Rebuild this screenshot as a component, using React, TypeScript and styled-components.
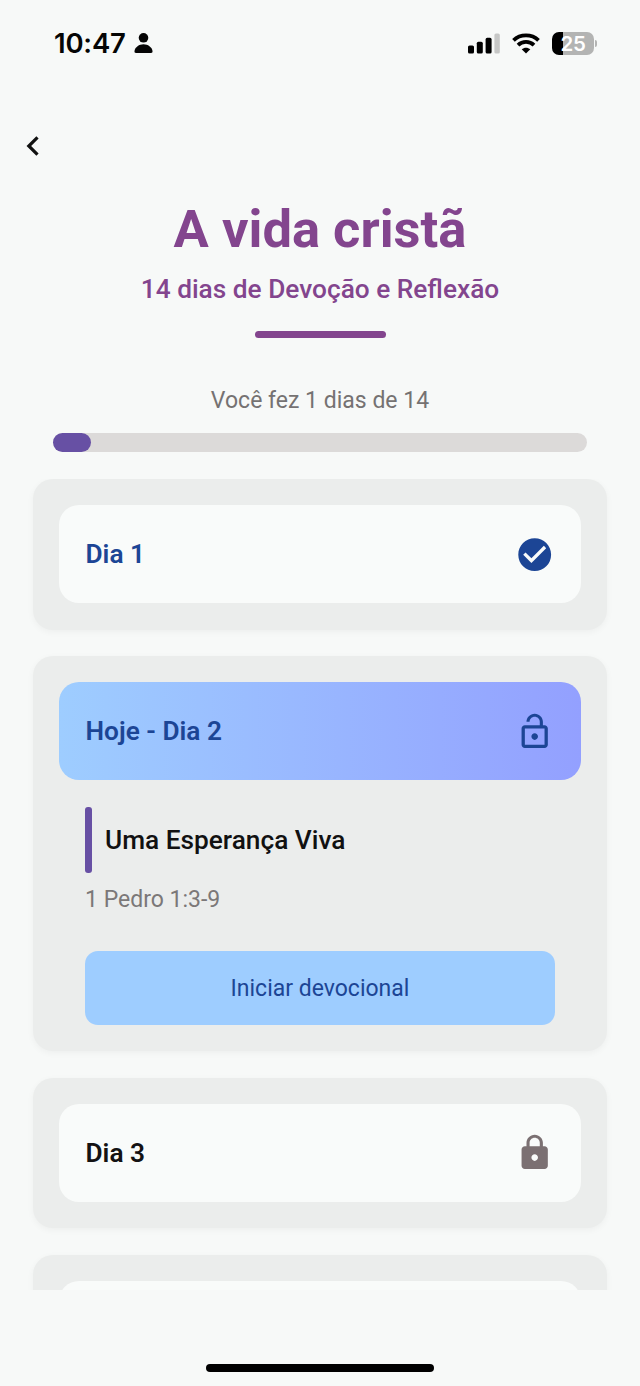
import React from "react";
import styled, { createGlobalStyle, css } from "styled-components";

const GlobalStyle = createGlobalStyle`
  * { box-sizing: border-box; }
  body { margin: 0; background: #f7f9f8; }
`;

const Screen = styled.div`
  width: 640px;
  height: 1386px;
  display: flex;
  flex-direction: column;
  overflow: hidden;
  background: #f7f9f8;
  font-family: Roboto, "Liberation Sans", sans-serif;
`;

const StatusBar = styled.header`
  height: 87px;
  flex: none;
  display: flex;
  align-items: center;
  justify-content: space-between;
  padding: 0 43px 0 54px;
`;

const Clock = styled.div`
  display: flex;
  align-items: center;
  gap: 8px;
  padding-bottom: 1px;
  color: #050505;
  font: 600 27.5px/32px Inter, "Liberation Sans", sans-serif;
  letter-spacing: -0.2px;
`;

const StatusIcons = styled.div`
  display: flex;
  align-items: center;
  gap: 12px;
`;

const Battery = styled.div`
  display: flex;
  align-items: center;
  gap: 1px;
`;

const BatteryBody = styled.div`
  width: 42px;
  height: 23px;
  border-radius: 7px;
  display: flex;
  align-items: center;
  justify-content: center;
  background: linear-gradient(90deg, #000 0 10.5px, #b3b4b3 10.5px);
  color: #fff;
  font: 600 20.5px/23px Inter, "Liberation Sans", sans-serif;
  letter-spacing: -0.3px;
`;

const BatteryCap = styled.div`
  width: 2px;
  height: 7px;
  border-radius: 0 2px 2px 0;
  background: #b3b4b3;
`;

const NavBar = styled.nav`
  height: 117px;
  flex: none;
  display: flex;
  align-items: center;
  padding-left: 25px;
`;

const BackButton = styled.button`
  display: flex;
  padding: 0;
  border: 0;
  background: none;
`;

const Heading = styled.div`
  flex: none;
  display: flex;
  flex-direction: column;
  align-items: center;
  color: #83458e;
`;

const Title = styled.h1`
  margin: 0;
  font-size: 52.5px;
  line-height: 50px;
  font-weight: 700;
`;

const Subtitle = styled.p`
  margin: 19px 0 0;
  font-size: 26.25px;
  line-height: 32px;
  font-weight: 500;
`;

const Divider = styled.div`
  width: 131px;
  height: 7px;
  margin-top: 26px;
  border-radius: 4px;
  background: #83458e;
`;

const Progress = styled.section`
  flex: none;
  display: flex;
  flex-direction: column;
  align-items: center;
  gap: 17px;
  padding: 48px 53px 27px;
`;

const ProgressLabel = styled.p`
  margin: 0;
  color: #757272;
  font-size: 23px;
  line-height: 30px;
`;

const Track = styled.div`
  width: 534px;
  height: 19px;
  border-radius: 10px;
  background: #dcdad9;
`;

const Fill = styled.div`
  height: 100%;
  border-radius: 10px;
  background: #6750a4;
`;

const DayList = styled.main`
  height: 811px;
  flex: none;
  overflow: hidden;
  display: flex;
  flex-direction: column;
  gap: 26.4px;
  padding: 0 33px;
`;

const DayCard = styled.article`
  flex: none;
  padding: 26.2px 26px;
  border-radius: 20px;
  background: #ebedec;
  box-shadow: 0 2px 7px rgba(20, 30, 25, 0.045);
`;

type Tone = "done" | "today" | "locked";

const DayHeader = styled.div<{ $tone: Tone }>`
  height: 98.2px;
  display: flex;
  align-items: center;
  justify-content: space-between;
  padding: 0 26.5px;
  border-radius: 20px;
  background: #f9fbfa;
  color: ${(p) => (p.$tone === "locked" ? "#141213" : "#1c4595")};
  font-size: 26.25px;
  line-height: 32px;
  font-weight: 600;
  ${(p) =>
    p.$tone === "today" &&
    css`
      background: linear-gradient(90deg, #9ecdff, #93a0ff);
    `}
`;

const DayBody = styled.div`
  display: flex;
  flex-direction: column;
  padding: 26.2px 26px 0;
`;

const Topic = styled.h2`
  height: 66px;
  margin: 0;
  display: flex;
  align-items: center;
  gap: 13px;
  color: #111;
  font-size: 26.25px;
  line-height: 32px;
  font-weight: 500;
`;

const TopicBar = styled.span`
  width: 7px;
  height: 66px;
  border-radius: 3px;
  background: #6750a4;
`;

const Passage = styled.p`
  margin: 12px 0 36.5px;
  color: #7b7878;
  font-size: 23px;
  line-height: 30px;
`;

const StartButton = styled.button`
  height: 74px;
  padding: 2px 0 0;
  border: 0;
  border-radius: 13px;
  background: #9ecdff;
  color: #1c4595;
  font: 400 23px/30px Roboto, "Liberation Sans", sans-serif;
`;

const Footer = styled.footer`
  flex: 1;
  display: flex;
  align-items: flex-end;
  justify-content: center;
  padding-bottom: 14px;
`;

const HomeIndicator = styled.div`
  width: 228px;
  height: 8px;
  border-radius: 4px;
  background: #000;
`;

const PersonIcon = () => (
  <svg width="19" height="20" viewBox="0 0 19 20" fill="#050505">
    <circle cx="9.5" cy="4.8" r="4.8" />
    <path d="M2 20C.8 20 .3 19.2.5 18 1.2 14 5 11.2 9.5 11.2S17.800 14 18.500 18c.2 1.200-.3 2-1.500 2Z" />
  </svg>
);

const SignalIcon = () => (
  <svg width="32" height="21" viewBox="0 0 32 21">
    <rect x="0" y="12.500" width="6" height="8" rx="1.600" />
    <rect x="8.800" y="8.700" width="6" height="11.800" rx="1.600" />
    <rect x="17.600" y="4.800" width="6" height="15.700" rx="1.600" />
    <rect x="26.400" y="0.500" width="5.400" height="20" rx="1.600" fill="#c6c7c6" />
  </svg>
);

const WifiIcon = () => (
  <svg width="28" height="21" viewBox="0 0 28 21" fill="none" stroke="#000" strokeWidth="3.800">
    <path d="M1.500 7.300C8.300.7 19.700.7 26.500 7.300" />
    <path d="M6 12.100c4.500-4.300 11.500-4.300 16 0" />
    <path d="M9.700 16.300c2.500-2.200 6.100-2.200 8.600 0L14 20.500Z" fill="#000" stroke="none" />
  </svg>
);

const BackIcon = () => (
  <svg width="15" height="20" viewBox="0 0 15 20" fill="none" stroke="#111" strokeWidth="3.200">
    <path d="M12.500 1.300 3.800 10l8.700 8.700" />
  </svg>
);

const iconPaths: Record<Tone, string> = {
  done: "M12 2C6.480 2 2 6.480 2 12s4.480 10 10 10 10-4.480 10-10S17.520 2 12 2zm-2 15-5-5 1.410-1.410L10 14.170l7.590-7.590L19 8l-9 9z",
  today:
    "M12 17c1.100 0 2-.9 2-2s-.9-2-2-2-2 .9-2 2 .9 2 2 2zm6-9h-1V6c0-2.760-2.240-5-5-5S7 3.240 7 6h1.900c0-1.710 1.390-3.100 3.100-3.100s3.100 1.390 3.100 3.100v2H6c-1.100 0-2 .9-2 2v10c0 1.100.9 2 2 2h12c1.100 0 2-.9 2-2V10c0-1.100-.9-2-2-2zm0 12H6V10h12v10z",
  locked:
    "M18 8h-1V6c0-2.760-2.240-5-5-5S7 3.240 7 6v2H6c-1.100 0-2 .9-2 2v10c0 1.100.9 2 2 2h12c1.100 0 2-.9 2-2V10c0-1.100-.9-2-2-2zm-6 9c-1.100 0-2-.9-2-2s.9-2 2-2 2 .9 2 2-.9 2-2 2zm3.100-9H8.900V6c0-1.710 1.390-3.100 3.100-3.100s3.100 1.390 3.100 3.100v2z",
};

const DayIcon = ({ tone }: { tone: Tone }) => (
  <svg width="39.4" height="39.4" viewBox="0 0 24 24" fill={tone === "locked" ? "#7b7072" : "#1c4595"}>
    <path d={iconPaths[tone]} />
  </svg>
);

interface Day {
  label: string;
  tone: Tone;
  topic?: string;
  passage?: string;
}

const days: Day[] = [
  { label: "Dia 1", tone: "done" },
  { label: "Hoje - Dia 2", tone: "today", topic: "Uma Esperança Viva", passage: "1 Pedro 1:3-9" },
  { label: "Dia 3", tone: "locked" },
];

export default function App() {
  const completed = 1;
  const total = 14;
  return (
    <Screen>
      <GlobalStyle />
      <StatusBar>
        <Clock>
          10:47
          <PersonIcon />
        </Clock>
        <StatusIcons>
          <SignalIcon />
          <WifiIcon />
          <Battery>
            <BatteryBody>25</BatteryBody>
            <BatteryCap />
          </Battery>
        </StatusIcons>
      </StatusBar>
      <NavBar>
        <BackButton aria-label="Voltar">
          <BackIcon />
        </BackButton>
      </NavBar>
      <Heading>
        <Title>A vida cristã</Title>
        <Subtitle>14 dias de Devoção e Reflexão</Subtitle>
        <Divider />
      </Heading>
      <Progress>
        <ProgressLabel>
          Você fez {completed} dias de {total}
        </ProgressLabel>
        <Track>
          <Fill style={{ width: `${(completed / total) * 100}%` }} />
        </Track>
      </Progress>
      <DayList>
        {days.map((day) => (
          <DayCard key={day.label}>
            <DayHeader $tone={day.tone}>
              {day.label}
              <DayIcon tone={day.tone} />
            </DayHeader>
            {day.topic && (
              <DayBody>
                <Topic>
                  <TopicBar />
                  {day.topic}
                </Topic>
                <Passage>{day.passage}</Passage>
                <StartButton>Iniciar devocional</StartButton>
              </DayBody>
            )}
          </DayCard>
        ))}
        <DayCard>
          <DayHeader $tone="locked" />
        </DayCard>
      </DayList>
      <Footer>
        <HomeIndicator />
      </Footer>
    </Screen>
  );
}
